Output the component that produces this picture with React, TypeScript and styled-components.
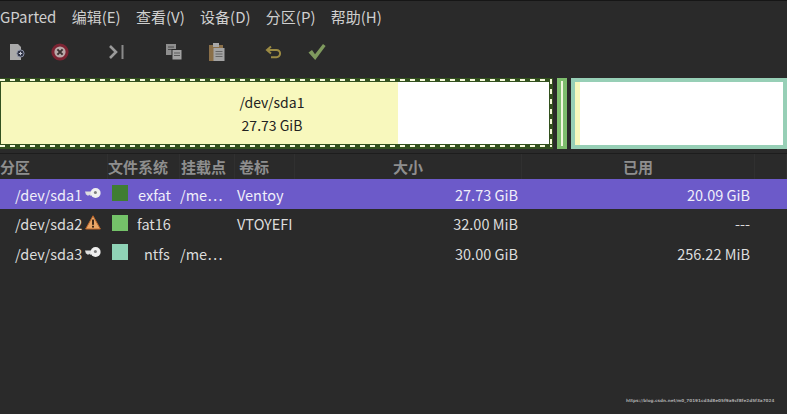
import React from 'react';
import styled, { createGlobalStyle } from 'styled-components';

const FONT = '"Noto Sans CJK SC", "Noto Sans", sans-serif';

const GlobalStyle = createGlobalStyle`
  html, body { margin: 0; padding: 0; background: #2a2a2a; }
  #root { width: 787px; height: 414px; overflow: hidden; }
`;

const Page = styled.div`
  position: relative;
  width: 787px;
  height: 414px;
  background: #2a2a2a;
  color: #d8d8d8;
  font-family: ${FONT};
  font-size: 15px;
  overflow: hidden;
  border-top: 1px solid #161616;
  box-sizing: border-box;
`;

const MenuBar = styled.div`
  display: flex;
  height: 32px;
  padding-bottom: 1px;
  box-sizing: border-box;
  align-items: center;
  gap: 15.3px;
  color: #cfcfcf;
`;

const MenuItem = styled.span`
  white-space: nowrap;
`;

const Toolbar = styled.div`
  display: flex;
  height: 37px;
  align-items: center;
  gap: 9px;
`;

const ToolButton = styled.div<{ $group?: boolean }>`
  display: flex;
  width: 34px;
  height: 34px;
  flex: none;
  align-items: center;
  justify-content: center;
  margin-left: ${(p) => (p.$group ? '14px' : '0')};
`;

const DiskMap = styled.div`
  display: flex;
  height: 71px;
  margin-top: 8px;
  gap: 4px;
`;

const SelectedPartition = styled.div`
  width: 553px;
  flex: none;
  box-sizing: border-box;
  padding: 1px 1px 2px 0;
  background: #33511f;
`;

const DashFrame = styled.div`
  height: 100%;
  box-sizing: border-box;
  padding: 3px 3px 3px 1px;
  background:
    repeating-linear-gradient(90deg, #f6f9dc 0 5px, transparent 5px 10px) 0 0 / 100% 2px no-repeat,
    repeating-linear-gradient(90deg, #f6f9dc 0 5px, transparent 5px 10px) 0 100% / 100% 2px no-repeat,
    repeating-linear-gradient(180deg, #f6f9dc 0 5px, transparent 5px 10px) 100% 0 / 2px 100% no-repeat;
`;

const UsageBar = styled.div`
  display: grid;
  height: 100%;
  grid-template-columns: 397px 1fr;
  grid-template-rows: 1fr;
  background: #fff;
  color: #222;
`;

const UsedPart = styled.div`
  grid-area: 1 / 1;
  background: #f8f8bd;
`;

const BarLabel = styled.div`
  grid-area: 1 / 1 / 1 / 3;
  display: flex;
  flex-direction: column;
  align-items: center;
  justify-content: center;
  padding-right: 6px;
  padding-top: 2px;
  line-height: 23px;
  font-size: 14px;
`;

const TinyPartition = styled.div`
  display: flex;
  width: 10px;
  flex: none;
  justify-content: center;
  padding: 3px 0;
  box-sizing: border-box;
  background: #7dbd6d;
`;

const TinyCore = styled.div`
  width: 2px;
  background: #f2f7df;
`;

const LastPartition = styled.div`
  display: flex;
  flex: 1;
  box-sizing: border-box;
  border: 4px solid #97cfb6;
  background: #fff;
`;

const LastUsed = styled.div`
  width: 5px;
  background: #f8f8bd;
`;

const HeaderRow = styled.div`
  display: grid;
  grid-template-columns: 108px 72px 55px 60px 227px 233px 1fr;
  height: 26px;
  margin-top: 4px;
  align-items: center;
  border-top: 1px solid #1d1d1d;
  box-sizing: border-box;
  color: #8e8e8e;
  font-weight: 700;
`;

const HeaderCell = styled.span<{ $center?: boolean; $pad?: number }>`
  display: block;
  height: 100%;
  line-height: 25px;
  text-align: ${(p) => (p.$center ? 'center' : 'left')};
  padding-left: ${(p) => p.$pad ?? 0}px;
  box-sizing: border-box;
  border-right: 1px solid #303030;
  white-space: nowrap;
`;

const Row = styled.div<{ $selected?: boolean }>`
  display: grid;
  grid-template-columns: 85px 27px 18px 50px 55px 60px 223px 232px;
  height: 29.5px;
  padding-top: 1px;
  box-sizing: border-box;
  align-items: center;
  font-size: 14.5px;
  background: ${(p) => (p.$selected ? '#6c5ac9' : 'transparent')};
  color: ${(p) => (p.$selected ? '#f0eefa' : '#dcdcdc')};
`;

const Cell = styled.span<{ $right?: boolean; $pad?: number }>`
  padding-left: ${(p) => p.$pad ?? 0}px;
  text-align: ${(p) => (p.$right ? 'right' : 'left')};
  white-space: nowrap;
  overflow: hidden;
`;

const Swatch = styled.span<{ $color: string }>`
  display: block;
  width: 16px;
  height: 16px;
  margin-top: -2px;
  background: ${(p) => p.$color};
`;

const StatusIcon = styled.span`
  display: flex;
  align-items: center;
  margin-top: -3px;
`;

const Watermark = styled.span`
  position: absolute;
  left: 626px;
  top: 397px;
  font-family: "DejaVu Sans", sans-serif;
  font-size: 4.2px;
  line-height: 6px;
  font-weight: 700;
  color: #a8a8a8;
  white-space: nowrap;
`;

const KeyIcon = () => (
  <svg width="16" height="12" viewBox="0 0 16 12">
    <path d="M0 4.6h8v3H6.4L5.4 9 4.2 7.8 3 9 1.8 7.8H1z" fill="#dedede" />
    <circle cx="10.6" cy="6" r="5" fill="#efefef" />
    <circle cx="10.4" cy="5.6" r="1.5" fill="#7d7d7d" />
  </svg>
);

const WarnIcon = () => (
  <svg width="16" height="15" viewBox="0 0 16 15">
    <path d="M8 .8 15.4 14H.6z" fill="#e9a667" stroke="#b8642a" strokeWidth="1" strokeLinejoin="round" />
    <rect x="7.1" y="4.6" width="1.8" height="5.2" fill="#2a1a10" />
    <rect x="7.1" y="10.8" width="1.8" height="1.8" fill="#2a1a10" />
  </svg>
);

const NewIcon = () => (
  <svg width="18" height="18" viewBox="0 0 18 18">
    <path d="M2 1h8l3 3v13H2z" fill="#a9a9a9" />
    <circle cx="12.5" cy="10.5" r="3.6" fill="#2d3142" stroke="#8d93a8" strokeWidth="1" />
    <path d="M10.8 10.5h3.4M12.5 8.8v3.4" stroke="#c6cad8" strokeWidth="1" />
  </svg>
);

const DeleteIcon = () => (
  <svg width="20" height="20" viewBox="0 0 20 20">
    <circle cx="10" cy="10" r="8.6" fill="#7c2433" />
    <circle cx="10" cy="10" r="5.6" fill="#b9a9a9" />
    <path d="M7.4 7.4l5.2 5.2M12.6 7.4l-5.2 5.2" stroke="#3a3030" strokeWidth="2" />
  </svg>
);

const ApplyIcon = () => (
  <svg width="18" height="16" viewBox="0 0 18 16">
    <path d="M2 2l6 6-6 6" fill="none" stroke="#9a9a9a" strokeWidth="2.6" />
    <path d="M14.5 1v14" stroke="#8a8a8a" strokeWidth="2" />
  </svg>
);

const CopyIcon = () => (
  <svg width="18" height="18" viewBox="0 0 18 18">
    <rect x="1" y="1" width="10" height="11" fill="#8e8e8e" />
    <path d="M3 4h6M3 6.5h6" stroke="#4a4a4a" strokeWidth="1" />
    <rect x="7" y="6.5" width="10" height="10.5" fill="#a2a2a2" stroke="#2a2a2a" strokeWidth="1" />
    <path d="M9 10h6M9 12.5h6" stroke="#5a5a5a" strokeWidth="1" />
  </svg>
);

const PasteIcon = () => (
  <svg width="18" height="20" viewBox="0 0 18 20">
    <rect x="1" y="3" width="14" height="16" fill="#8a6f48" />
    <rect x="5" y="1" width="6" height="4" fill="#a8a8a8" />
    <rect x="5.5" y="6" width="11" height="13" fill="#a3a3a3" />
    <path d="M7.5 9.5h7M7.5 12h7M7.5 14.5h7" stroke="#666" strokeWidth="1" />
  </svg>
);

const UndoIcon = () => (
  <svg width="18" height="14" viewBox="0 0 18 14">
    <path d="M6 1.5 2 5l4 3.5" fill="none" stroke="#9b8a43" strokeWidth="2" />
    <path d="M3 5h8.5a3.6 3.6 0 0 1 0 7.2H6" fill="none" stroke="#9b8a43" strokeWidth="2" />
  </svg>
);

const CheckIcon = () => (
  <svg width="20" height="18" viewBox="0 0 20 18">
    <path d="M1.5 9.5 5 7l3 4.2L16 1l2.6 2L8.2 17z" fill="#7f9a5e" />
  </svg>
);

const menus = ['GParted', '编辑(E)', '查看(V)', '设备(D)', '分区(P)', '帮助(H)'];

const tools = [
  { icon: <NewIcon /> },
  { icon: <DeleteIcon /> },
  { icon: <ApplyIcon />, group: true },
  { icon: <CopyIcon />, group: true },
  { icon: <PasteIcon /> },
  { icon: <UndoIcon />, group: true },
  { icon: <CheckIcon /> },
];

const rows = [
  { name: '/dev/sda1', status: <KeyIcon />, color: '#3f7d33', fs: 'exfat', fsPad: 8, mount: '/me⋯', label: 'Ventoy', size: '27.73 GiB', used: '20.09 GiB', selected: true },
  { name: '/dev/sda2', status: <WarnIcon />, color: '#74c269', fs: 'fat16', fsPad: 7, mount: '', label: 'VTOYEFI', size: '32.00 MiB', used: '---' },
  { name: '/dev/sda3', status: <KeyIcon />, color: '#8fd3b6', fs: 'ntfs', fsPad: 14, mount: '/me⋯', label: '', size: '30.00 GiB', used: '256.22 MiB' },
];

function App() {
  return (
    <Page>
      <GlobalStyle />
      <MenuBar>
        {menus.map((m) => <MenuItem key={m}>{m}</MenuItem>)}
      </MenuBar>
      <Toolbar>
        {tools.map((t, i) => (
          <ToolButton key={i} $group={t.group}>{t.icon}</ToolButton>
        ))}
      </Toolbar>
      <DiskMap>
        <SelectedPartition>
          <DashFrame>
            <UsageBar>
              <UsedPart />
              <BarLabel>
                <span>/dev/sda1</span>
                <span>27.73 GiB</span>
              </BarLabel>
            </UsageBar>
          </DashFrame>
        </SelectedPartition>
        <TinyPartition><TinyCore /></TinyPartition>
        <LastPartition><LastUsed /></LastPartition>
      </DiskMap>
      <HeaderRow>
        <HeaderCell>分区</HeaderCell>
        <HeaderCell>文件系统</HeaderCell>
        <HeaderCell $pad={1}>挂载点</HeaderCell>
        <HeaderCell $pad={4}>卷标</HeaderCell>
        <HeaderCell $center>大小</HeaderCell>
        <HeaderCell $center>已用</HeaderCell>
        <HeaderCell />
      </HeaderRow>
      {rows.map((r) => (
        <Row key={r.name} $selected={r.selected}>
          <Cell $pad={15}>{r.name}</Cell>
          <StatusIcon>{r.status}</StatusIcon>
          <Swatch $color={r.color} />
          <Cell $pad={r.fsPad}>{r.fs}</Cell>
          <Cell>{r.mount}</Cell>
          <Cell $pad={2}>{r.label}</Cell>
          <Cell $right>{r.size}</Cell>
          <Cell $right>{r.used}</Cell>
        </Row>
      ))}
      <Watermark>https://blog.csdn.net/m0_70191cd3d8e05f9a9cf8fe2d5f3a7024</Watermark>
    </Page>
  );
}

export default App;
